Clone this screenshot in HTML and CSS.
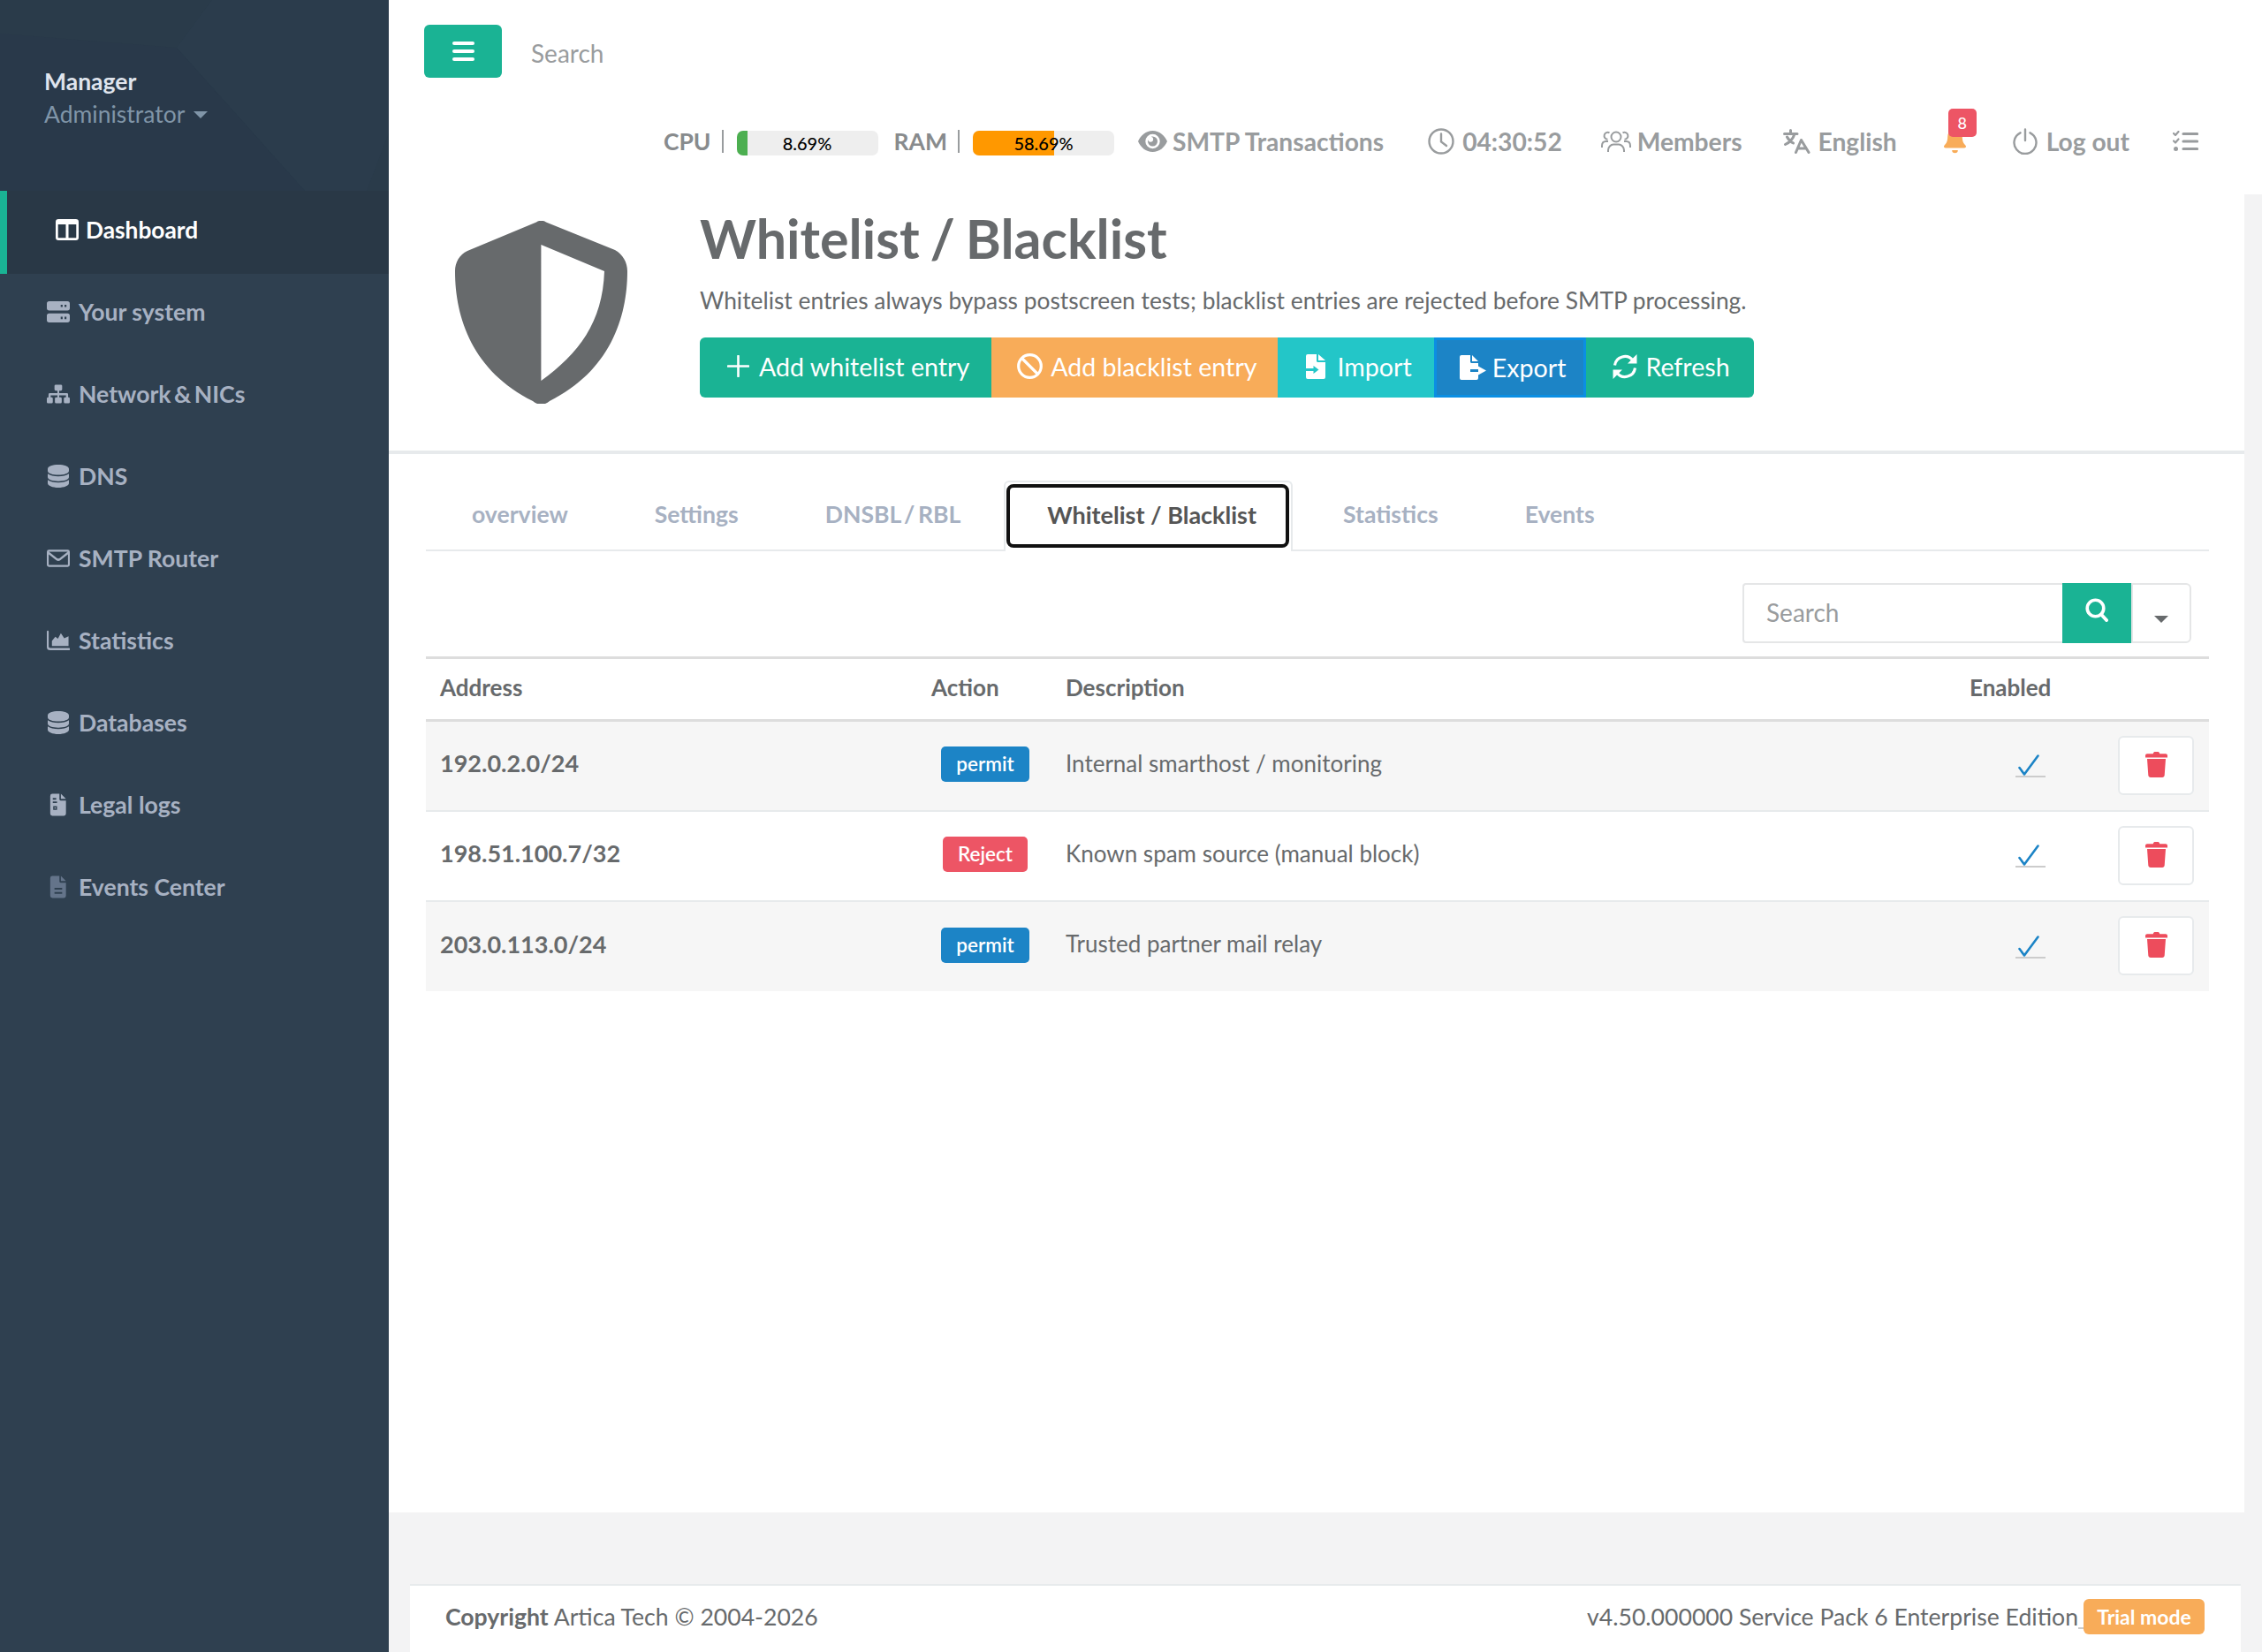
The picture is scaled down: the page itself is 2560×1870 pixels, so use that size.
FILE: index.html
```html
<!DOCTYPE html>
<html lang="en">
<head>
<meta charset="utf-8">
<title>Whitelist / Blacklist</title>
<link rel="stylesheet" href="styles.css">
</head>
<body>
<svg class="defs" width="0" height="0" aria-hidden="true">
  <symbol id="i-db" viewBox="0 0 24 26"><path fill="currentColor" d="M12 0C5.5 0 0 2 0 4.8V7c0 2.8 5.5 4.6 12 4.6S24 9.800 24 7V4.800C24 2 18.500 0 12 0zM0 10.200V14c0 2.800 5.500 4.700 12 4.700S24 16.800 24 14v-3.800c-2.600 2-7.200 3-12 3s-9.400-1-12-3zM0 17.200V21c0 2.800 5.500 5 12 5s12-2.200 12-5v-3.800c-2.600 2-7.200 3-12 3s-9.400-1-12-3z"/></symbol>
  <symbol id="i-trash" viewBox="0 0 25 29"><path fill="currentColor" d="M9 1.500C9.300.5 10 0 11 0h3c1 0 1.700.5 2 1.500l.3.800H23c1.100 0 2 .9 2 2V6.500H0V4.300c0-1.100.9-2 2-2h6.700zM2 8h21l-1.300 18.500c-.1 1.400-1.200 2.500-2.600 2.500H5.900c-1.400 0-2.500-1.100-2.600-2.500z"/></symbol>
  <symbol id="i-check" viewBox="0 0 24 24"><path fill="none" stroke="currentColor" stroke-width="2.600" stroke-linecap="round" stroke-linejoin="round" d="M1.500 15l5.500 7.500L22.500 1.500"/></symbol>
</svg>

<div class="app">
  <aside class="sidebar">
    <div class="profile">
      <svg class="profile-bg" viewBox="0 0 440 216" preserveAspectRatio="none" aria-hidden="true">
        <rect width="440" height="216" fill="#2a3b4a"/>
        <polygon points="0,38 200,54 345,216 0,216" fill="#27384a" opacity=".5"/>
        <polygon points="240,0 200,54 345,216 415,216 440,150 440,0" fill="#2c3f4f" opacity=".45"/>
      </svg>
      <div class="profile-name">Manager</div>
      <div class="profile-role">Administrator <span class="caret caret-light"></span></div>
    </div>
    <nav>
      <a class="nav-item nav-active"><svg class="nav-icon" viewBox="0 0 24 22"><path fill="currentColor" d="M3 0h18a3 3 0 0 1 3 3v16a3 3 0 0 1-3 3H3a3 3 0 0 1-3-3V3a3 3 0 0 1 3-3zm-.5 5.500V19c0 .3.200.5.500.5h7.600v-14zm10.900 0v14H21c.3 0 .5-.2.500-.5V5.500z"/></svg><span>Dashboard</span></a>
      <a class="nav-item"><svg class="nav-icon" viewBox="0 0 24 22"><path fill="currentColor" fill-rule="evenodd" d="M2.500 0h19A2.500 2.500 0 0 1 24 2.500V7a2.500 2.500 0 0 1-2.500 2.500h-19A2.500 2.500 0 0 1 0 7V2.500A2.500 2.500 0 0 1 2.500 0zM2.500 12.500h19A2.500 2.500 0 0 1 24 15v4.500a2.500 2.500 0 0 1-2.500 2.500h-19A2.500 2.500 0 0 1 0 19.500V15a2.500 2.500 0 0 1 2.500-2.500zM14.500 3.500h2v2.500h-2zM18.500 3.500h2v2.500h-2zM14.500 16h2v2.500h-2zM18.500 16h2v2.500h-2z"/></svg><span>Your system</span></a>
      <a class="nav-item"><svg class="nav-icon" viewBox="0 0 27 22"><path fill="currentColor" d="M10.500 0h6a1.500 1.500 0 0 1 1.500 1.500v4A1.500 1.500 0 0 1 16.500 7h-2v3h9A1.500 1.500 0 0 1 25 11.500V15h.5A1.500 1.500 0 0 1 27 16.500v4a1.500 1.500 0 0 1-1.500 1.500h-4a1.500 1.500 0 0 1-1.500-1.500v-4a1.500 1.500 0 0 1 1.500-1.500h1v-2.500h-8V15H16a1.500 1.500 0 0 1 1.500 1.500v4A1.500 1.500 0 0 1 16 22h-5a1.500 1.500 0 0 1-1.500-1.500v-4A1.500 1.500 0 0 1 11 15h1.500v-2.500h-8V15h1A1.500 1.500 0 0 1 7 16.500v4A1.500 1.500 0 0 1 5.500 22h-4A1.500 1.500 0 0 1 0 20.500v-4A1.500 1.500 0 0 1 1.500 15H2v-3.500A1.500 1.500 0 0 1 3.500 10h9V7h-2A1.500 1.500 0 0 1 9 5.500v-4A1.500 1.500 0 0 1 10.500 0z"/></svg><span class="tight-words">Network &amp; NICs</span></a>
      <a class="nav-item"><svg class="nav-icon icon-db"><use href="#i-db"/></svg><span>DNS</span></a>
      <a class="nav-item"><svg class="nav-icon" viewBox="0 0 27 20"><path fill="currentColor" d="M2.500 0h22A2.500 2.500 0 0 1 27 2.500v15a2.500 2.500 0 0 1-2.500 2.500h-22A2.500 2.500 0 0 1 0 17.500v-15A2.500 2.500 0 0 1 2.500 0zM2.200 5.300v12.200c0 .2.100.3.300.3h22c.2 0 .3-.1.300-.3V5.300l-9 7a4 4 0 0 1-4.600 0zm.2-3l9.800 7.700c.7.500 1.900.5 2.600 0l9.800-7.700c0-.1-.1-.1-.1-.1h-22c-.1 0-.1 0-.1.100z"/></svg><span>SMTP Router</span></a>
      <a class="nav-item"><svg class="nav-icon" viewBox="0 0 27 23"><path fill="currentColor" d="M0 1a1 1 0 0 1 2.200 0v17.500c0 1 .8 1.800 1.800 1.800h22a1.300 1.300 0 0 1 0 2.700H4a4 4 0 0 1-4-4zM6 18V12l4-5 3 2.500L16.500 3l4 6 5-2.500V18z"/></svg><span>Statistics</span></a>
      <a class="nav-item"><svg class="nav-icon icon-db"><use href="#i-db"/></svg><span>Databases</span></a>
      <a class="nav-item"><svg class="nav-icon" viewBox="0 0 27 26"><path fill="currentColor" fill-rule="evenodd" d="M6.500 0h8.300v6.500c0 .8.700 1.500 1.500 1.500h6.200v15.500a2.500 2.500 0 0 1-2.500 2.500h-13.500A2.500 2.500 0 0 1 4 23.500v-21A2.500 2.500 0 0 1 6.500 0zM16.500 0l6 6h-6zM7 5h4v2H7zM7 9h5v2H7zM7.500 14.500h4.500V19H7.500zM9 16v1.500h1.500V16z"/></svg><span>Legal logs</span></a>
      <a class="nav-item nav-dim"><svg class="nav-icon" viewBox="0 0 27 26"><path class="dim-fill" fill-rule="evenodd" d="M6.500 0h8.300v6.500c0 .8.700 1.500 1.500 1.500h6.200v15.500a2.500 2.500 0 0 1-2.500 2.500h-13.500A2.500 2.500 0 0 1 4 23.500v-21A2.500 2.500 0 0 1 6.500 0zM16.500 0l6 6h-6zM9 14v2h9v-2zM9 19v2h9v-2z"/></svg><span>Events Center</span></a>
    </nav>
  </aside>

  <main class="main">
    <header class="topbar">
      <div class="topbar-row">
        <button class="menu-btn" type="button" aria-label="Menu"><span></span><span></span><span></span></button>
        <input class="top-search" type="text" placeholder="Search">
      </div>
      <div class="status-row">
        <span class="stat-label">CPU</span><span class="stat-sep"></span>
        <div class="meter"><div class="meter-fill fill-green" style="width:12px"></div><span class="meter-text">8.69%</span></div>
        <span class="stat-label stat-ram">RAM</span><span class="stat-sep"></span>
        <div class="meter"><div class="meter-fill fill-orange" style="width:92px"></div><span class="meter-text">58.69%</span></div>
        <a class="status-link link-eye"><svg class="ic-eye" viewBox="0 0 33 24"><path fill="currentColor" fill-rule="evenodd" d="M16.500 0C24 0 30 5 33 12c-3 7-9 12-16.500 12S3 19 0 12C3 5 9 0 16.500 0zm0 3.800a8.200 8.200 0 1 0 0 16.400 8.200 8.200 0 0 0 0-16.400zm0 2.700a5.500 5.500 0 1 1-5.500 5.500c0-.6.100-1.100.3-1.600a3 3 0 1 0 3.600-3.600c.5-.2 1-.3 1.600-.3z"/></svg><span>SMTP Transactions</span></a>
        <a class="status-link link-clock"><svg class="ic-clock" viewBox="0 0 30 30"><circle cx="15" cy="15" r="13.500" fill="none" stroke="currentColor" stroke-width="2.400"/><path d="M15 6.500V15.500l6 4.500" fill="none" stroke="currentColor" stroke-width="2.400" stroke-linecap="round"/></svg><span>04:30:52</span></a>
        <a class="status-link link-members"><svg class="ic-users" viewBox="0 0 34 26"><g fill="none" stroke="currentColor" stroke-width="2"><circle cx="17" cy="8" r="5.500"/><path d="M8 25v-2c0-3.500 3-6.500 6-6.500h6c3 0 6 3 6 6.500v2"/><path d="M9.500 3.300a4 4 0 1 0-2 7.500M1 20v-2c0-3.500 2-5 4.500-5H8M24.500 3.300a4 4 0 1 1 2 7.500M33 20v-2c0-3.500-2-5-4.500-5H26"/></g></svg><span>Members</span></a>
        <a class="status-link link-lang"><svg class="ic-lang" viewBox="0 0 31 28"><g fill="none" stroke="currentColor" stroke-width="3" stroke-linecap="round" stroke-linejoin="round"><path d="M1.500 5.500H16M8.500 1.500v4M13 5.500c-1.500 5-5 9.500-10.500 12M4.500 9c1.500 3 4 5.500 7 7M14.500 26.500l6-14 8.500 14M17 22h9"/></g></svg><span>English</span></a>
        <a class="status-bell" aria-label="Notifications"><svg class="ic-bell" viewBox="0 0 25 30"><path fill="#f8ac59" d="M12.500 0c1 0 1.800.8 1.800 1.800v1a8 8 0 0 1 6.500 8c0 6 2 8 3.600 9.700.4.400.600.900.600 1.300 0 1-.8 1.700-1.800 1.700H1.800c-1 0-1.800-.7-1.800-1.700 0-.4.200-.9.600-1.300C2.200 18.800 4.200 16.800 4.200 10.800a8 8 0 0 1 6.500-8v-1c0-1 .8-1.800 1.800-1.800zM9.200 26h6.600a3.300 3.300 0 0 1-6.600 0z"/></svg><span class="bell-badge">8</span></a>
        <a class="status-link link-logout"><svg class="ic-power" viewBox="0 0 28 30"><path d="M8.500 5.300a12.500 12.500 0 1 0 11 0M14 1.500V14" fill="none" stroke="currentColor" stroke-width="2.400" stroke-linecap="round"/></svg><span>Log out</span></a>
        <a class="status-tasks" aria-label="Tasks"><svg class="ic-tasks" viewBox="0 0 29 24"><path fill="none" stroke="currentColor" stroke-width="2.200" stroke-linecap="round" stroke-linejoin="round" d="M1 3l2 2 3.500-4M1 11.500l2 2 3.500-4"/><circle cx="3.500" cy="20.500" r="2.500" fill="currentColor"/><path fill="none" stroke="currentColor" stroke-width="3.200" stroke-linecap="round" d="M12 3.500h15.500M12 12h15.500M12 20.500h15.500"/></svg></a>
      </div>
    </header>

    <section class="page">
      <div class="page-header">
        <svg class="shield" viewBox="0 0 195 207" aria-hidden="true"><path fill="#676a6c" fill-rule="evenodd" d="M92 1.500a10 10 0 0 1 11 0L181 33C190 38 195 47 195 57C195 110 175 170 107 204a14 14 0 0 1-19 0C20 170 0 110 0 57C0 47 5 38 14 34zM97.400 27V181C140 150 167 115 169 57z"/></svg>
        <div class="header-text">
          <h1 class="page-title">Whitelist / Blacklist</h1>
          <p class="page-sub">Whitelist entries always bypass postscreen tests; blacklist entries are rejected before SMTP processing.</p>
          <div class="btn-group">
            <button class="btn btn-green btn-first" type="button"><svg class="btn-ic ic-plus" viewBox="0 0 25 25"><path d="M12.500 1v23M1 12.500h23" stroke="currentColor" stroke-width="2.600" stroke-linecap="round" fill="none"/></svg>Add whitelist entry</button>
            <button class="btn btn-orange" type="button"><svg class="btn-ic ic-ban" viewBox="0 0 29 29"><circle cx="14.500" cy="14.500" r="12.800" fill="none" stroke="currentColor" stroke-width="3.200"/><path d="M5.500 5.500l18 18" stroke="currentColor" stroke-width="3.200" fill="none"/></svg>Add blacklist entry</button>
            <button class="btn btn-cyan" type="button"><svg class="btn-ic ic-file" viewBox="0 0 22 28"><path fill="currentColor" fill-rule="evenodd" d="M2 0h10v7.500c0 .8.700 1.500 1.500 1.500H22v17a2 2 0 0 1-2 2H2a2 2 0 0 1-2-2V19h8.500v3l6-4.500-6-4.500v3H0V2a2 2 0 0 1 2-2zM14 0l8 7h-8z"/></svg>Import</button>
            <button class="btn btn-blue" type="button"><svg class="btn-ic ic-export" viewBox="0 0 30 28"><path fill="currentColor" fill-rule="evenodd" d="M2 0h10v7.500c0 .8.700 1.500 1.500 1.500H21v7h-9v3h9v7a2 2 0 0 1-2 2H2a2 2 0 0 1-2-2V2a2 2 0 0 1 2-2zM14 0l7 7h-7zM21 12.500l9 5-9 5z"/></svg>Export</button>
            <button class="btn btn-green btn-last" type="button"><svg class="btn-ic ic-refresh" viewBox="0 0 28 28"><path fill="none" stroke="currentColor" stroke-width="3.200" d="M2.500 12.500A11.500 11.500 0 0 1 23 7M25.500 15.500A11.500 11.500 0 0 1 5 21"/><path fill="currentColor" d="M27.500 0v10.500H17zM.5 28V17.500H11z"/></svg>Refresh</button>
          </div>
        </div>
      </div>

      <div class="panel">
        <ul class="tabs">
          <li class="tab"><a>overview</a></li>
          <li class="tab"><a>Settings</a></li>
          <li class="tab tab-tight"><a>DNSBL / RBL</a></li>
          <li class="tab tab-active"><a>Whitelist / Blacklist</a></li>
          <li class="tab"><a>Statistics</a></li>
          <li class="tab"><a>Events</a></li>
        </ul>

        <div class="table-tools">
          <input class="tool-input" type="text" placeholder="Search">
          <button class="tool-search" type="button" aria-label="Search"><svg viewBox="0 0 26 27"><circle cx="11.500" cy="11.500" r="9.300" fill="none" stroke="currentColor" stroke-width="3.600"/><path d="M18 18.500l6 6.500" stroke="currentColor" stroke-width="4" stroke-linecap="round"/></svg></button>
          <button class="tool-drop" type="button" aria-label="Options"><span class="caret caret-dark"></span></button>
        </div>

        <table class="grid">
          <colgroup><col class="c-addr"><col class="c-act"><col class="c-desc"><col class="c-en"><col class="c-del"></colgroup>
          <thead>
            <tr><th>Address</th><th>Action</th><th>Description</th><th>Enabled</th><th></th></tr>
          </thead>
          <tbody>
            <tr class="odd">
              <td class="addr">192.0.2.0/24</td>
              <td class="act"><span class="pill pill-blue">permit</span></td>
              <td class="desc">Internal smarthost / monitoring</td>
              <td class="en"><a class="check"><svg><use href="#i-check"/></svg></a></td>
              <td class="del"><button class="del-btn" type="button" aria-label="Delete"><svg><use href="#i-trash"/></svg></button></td>
            </tr>
            <tr>
              <td class="addr">198.51.100.7/32</td>
              <td class="act"><span class="pill pill-red">Reject</span></td>
              <td class="desc">Known spam source (manual block)</td>
              <td class="en"><a class="check"><svg><use href="#i-check"/></svg></a></td>
              <td class="del"><button class="del-btn" type="button" aria-label="Delete"><svg><use href="#i-trash"/></svg></button></td>
            </tr>
            <tr class="odd">
              <td class="addr">203.0.113.0/24</td>
              <td class="act"><span class="pill pill-blue">permit</span></td>
              <td class="desc">Trusted partner mail relay</td>
              <td class="en"><a class="check"><svg><use href="#i-check"/></svg></a></td>
              <td class="del"><button class="del-btn" type="button" aria-label="Delete"><svg><use href="#i-trash"/></svg></button></td>
            </tr>
          </tbody>
        </table>
      </div>
    </section>

    <footer class="footer">
      <div class="copy"><strong>Copyright</strong> Artica Tech © 2004-2026</div>
      <div class="version">v4.50.000000 Service Pack 6 Enterprise Edition<a class="trial-gap"></a><span class="trial">Trial mode</span></div>
    </footer>
  </main>
</div>
</body>
</html>
```

FILE: styles.css
```css
* { box-sizing: border-box; }
html, body { margin: 0; padding: 0; height: 1870px; overflow: hidden; }
body {
  font-family: "Lato", "Liberation Sans", sans-serif;
  font-size: 26px;
  color: #676a6c;
  background: #f3f3f4;
}
.defs { position: absolute; }
.app { display: flex; width: 2560px; height: 1870px; overflow: hidden; }

/* Sidebar */
.sidebar { width: 440px; flex: none; background: #2f4050; }
.profile { position: relative; height: 216px; padding: 74px 0 0 50px; overflow: hidden; }
.profile-bg { position: absolute; left: 0; top: 0; width: 100%; height: 100%; }
.profile-name, .profile-role { position: relative; }
.profile-name { font-size: 26.500px; font-weight: 700; line-height: 36px; color: #dfe4ed; }
.profile-role { font-size: 26.500px; line-height: 38px; color: #8095a8; display: flex; align-items: center; gap: 10px; }
.caret { display: inline-block; width: 0; height: 0; border-left: 8px solid transparent; border-right: 8px solid transparent; }
.caret-light { border-top: 8px solid #8095a8; margin-top: 2px; }
.caret-dark { border-top: 8px solid #676a6c; }
.nav-item { display: flex; align-items: center; height: 93px; padding-left: 53px; padding-bottom: 8px; color: #a7b1c2; font-weight: 700; font-size: 26.600px; }
.nav-icon { width: 26px; height: 26px; margin-right: 10px; flex: none; }
.tight-words { word-spacing: -3px; }
.nav-active { height: 94px; padding-left: 55px; padding-bottom: 6px; border-left: 8px solid #1ab394; background: #293846; color: #fff; font-size: 26.300px; }
.nav-active .nav-icon { margin-right: 8px; }
.icon-db { color: #a7b1c2; }
.dim-fill { fill: #64748a; }

/* Top bar */
.main { flex: 1; display: flex; flex-direction: column; min-width: 0; }
.topbar { height: 220px; padding-top: 28px; background: #fff; flex: none; }
.topbar-row { display: flex; align-items: center; height: 60px; padding-left: 40px; }
.menu-btn { width: 88px; height: 60px; border: 0; border-radius: 6px; background: #1ab394; display: flex; flex-direction: column; align-items: center; justify-content: center; gap: 5px; padding: 0; }
.menu-btn span { display: block; width: 25px; height: 4px; border-radius: 2px; background: #fff; }
.top-search, .tool-input { border: 0; background: transparent; font: 400 28px "Lato", sans-serif; color: #676a6c; outline: none; padding: 0; }
.top-search { margin-left: 33px; width: 300px; height: 34px; margin-top: 3px; }
.top-search::placeholder, .tool-input::placeholder { color: #999c9e; opacity: 1; }
.status-row { display: flex; align-items: center; justify-content: flex-end; height: 28px; margin-top: 58px; padding-right: 72px; color: #999c9e; font-size: 28.200px; font-weight: 700; }
.stat-label { color: #888b8d; font-size: 26.500px; }
.stat-sep { width: 2px; height: 26px; background: #999c9e; margin: 0 15px 0 12px; }
.stat-ram { margin-left: 18px; }
.meter { position: relative; width: 160px; height: 28px; margin-top: 4px; border-radius: 7px; background: #eeeeee; overflow: hidden; text-align: center; }
.meter-fill { position: absolute; left: 0; top: 0; bottom: 0; }
.fill-green { background: #4caf50; }
.fill-orange { background: #ff9800; }
.meter-text { position: relative; font-size: 20px; line-height: 28px; color: #000; font-weight: 500; display: block; }
.status-link { display: flex; align-items: center; white-space: nowrap; }
.link-eye { margin-left: 27px; }
.link-clock { margin-left: 50px; }
.link-members { margin-left: 44px; }
.link-lang { margin-left: 46px; }
.link-logout { margin-left: 53px; }
.ic-eye { width: 33px; height: 24px; margin-right: 6px; }
.ic-clock { width: 30px; height: 30px; margin-right: 9px; }
.ic-users { width: 34px; height: 26px; margin-right: 7px; }
.ic-lang { width: 31px; height: 28px; margin-right: 9px; }
.ic-power { width: 28px; height: 30px; margin-right: 10px; }
.status-bell { position: relative; display: block; width: 25px; height: 30px; margin-left: 53px; }
.ic-bell { display: block; width: 25px; height: 30px; margin-top: -1px; }
.bell-badge { position: absolute; left: 5px; top: -22px; width: 32px; height: 32px; border-radius: 5px; background: #ed5565; color: #fff; font-size: 18px; font-weight: 500; line-height: 32px; text-align: center; }
.status-tasks { display: block; width: 29px; height: 24px; margin-left: 49px; }
.ic-tasks { display: block; width: 29px; height: 24px; }

/* Page */
.page { width: 2100px; height: 1492px; background: #fff; flex: none; }
.page-header { display: flex; height: 294px; padding: 30px 0 0 75px; border-bottom: 4px solid #e7eaec; }
.shield { width: 195px; height: 207px; flex: none; }
.header-text { margin-left: 82px; margin-top: -30px; }
.page-title { margin: 0; padding-top: 10px; font-size: 61px; line-height: 80px; font-weight: 700; color: #676a6c; white-space: nowrap; word-spacing: -3px; }
.page-sub { margin: 0; font-size: 26.330px; line-height: 34px; margin-top: 13px; white-space: nowrap; }
.btn-group { display: flex; margin-top: 25px; height: 68px; }
.btn { display: flex; align-items: center; height: 68px; border: 0; padding: 0 25px 3px 29px; font: 400 28.600px "Lato", sans-serif; color: #fff; white-space: nowrap; }
.btn-ic { flex: none; margin-right: 9px; }
.btn-green { background: #1ab394; }
.btn-orange { background: #f8ac59; padding-right: 23px; }
.btn-cyan { background: #23c6c8; padding-left: 32px; }
.btn-blue { background: #1c84c6; border: 3px solid #0b8fe3; padding-left: 26px; padding-right: 20px; padding-bottom: 0; }
.btn-first { border-radius: 6px 0 0 6px; padding-left: 31px; }
.btn-last { border-radius: 0 6px 6px 0; padding-left: 30px; padding-right: 27px; }
.ic-plus { width: 25px; height: 25px; margin-right: 11px; }
.ic-ban { width: 29px; height: 29px; }
.ic-file { width: 22px; height: 28px; margin-right: 14px; }
.ic-export { width: 30px; height: 28px; margin-right: 7px; }
.ic-refresh { width: 28px; height: 28px; margin-right: 9px; }

.panel { padding: 30px 40px 0 42px; }
.tabs { display: flex; list-style: none; margin: 0; padding: 0 0 0 3px; height: 80px; border-bottom: 2px solid #e7eaec; }
.tab { height: 80px; padding: 0 49px; font-size: 26.600px; font-weight: 700; color: #a7b1c2; line-height: 76px; white-space: nowrap; }
.tab-tight { word-spacing: -3px; }
.tab-active { position: relative; height: 80px; padding: 2px 2px 4px 1px; margin: 0 8px 0 0; background: #fff; border: 2px solid #e7eaec; border-bottom: 0; border-radius: 6px 6px 0 0; color: #555; font-size: 27px; line-height: 62px; }
.tab-active a { display: block; height: 72px; padding: 0 33px 0 42px; border: 4px solid #111; border-radius: 8px; }

.table-tools { display: flex; justify-content: flex-end; margin-top: 36px; height: 68px; padding-right: 20px; }
.tool-input { width: 362px; height: 68px; border: 2px solid #e5e6e7; border-right: 0; padding-left: 25px; padding-bottom: 2px; border-radius: 4px 0 0 4px; }
.tool-search { width: 78px; height: 68px; border: 0; padding: 0; background: #1ab394; color: #fff; display: flex; align-items: flex-start; justify-content: center; padding-top: 17px; }
.tool-search svg { width: 26px; height: 27px; }
.tool-drop { width: 68px; height: 68px; background: #fff; border: 2px solid #e5e6e7; border-radius: 0 6px 6px 0; padding: 12px 0 0; }

.grid { width: 2018px; margin-top: 15px; border-collapse: collapse; table-layout: fixed; border-top: 3px solid #ddd; }
.c-addr { width: 556px; }
.c-act { width: 152px; }
.c-desc { width: 1023px; }
.c-en { width: 170px; }
.c-del { width: 117px; }
.grid th { height: 71px; padding: 0 16px 5px; text-align: left; font-size: 26px; font-weight: 700; color: #676a6c; border-bottom: 3px solid #ddd; }
.grid td { height: 102px; padding: 0 16px 6px; font-size: 26px; border-top: 0; border-bottom: 2px solid #e7eaec; }
.grid tr:last-child td { border-bottom: 0; }
.odd td { background: #f6f6f6; }
.grid .addr { font-size: 27px; font-weight: 700; }
.grid .act { text-align: center; padding: 0 0 3px 2px; white-space: nowrap; }
.pill { display: inline-block; height: 40px; line-height: 40px; border-radius: 5px; padding: 0 17px; color: #fff; font-size: 22.500px; font-weight: 600; }
.pill-blue { background: #1c84c6; }
.pill-red { background: #ed5565; }
.grid .en { text-align: center; padding: 0; }
.check { display: inline-block; width: 34px; height: 33px; padding: 7px 0 0 3px; border-bottom: 2px solid #ccc; color: #1c84c6; }
.check svg { display: block; width: 24px; height: 24px; }
.grid .del { padding: 3px 3px 0 0; text-align: center; }
.del-btn { display: inline-block; width: 86px; height: 67px; background: #fff; border: 2px solid #e7eaec; border-radius: 6px; padding: 0; color: #ed4c5c; }
.del-btn svg { display: block; width: 25px; height: 29px; margin: 0 auto 2px; }

/* Footer */
.footer { margin: 81px 24px 0 24px; height: 77px; flex: none; background: #fff; border-top: 2px solid #e7eaec; display: flex; align-items: center; justify-content: space-between; padding: 0 41px 6px 40px; font-size: 26.600px; }
.copy strong { font-weight: 700; }
.version { display: flex; align-items: center; }
.trial-gap { width: 6px; height: 20px; border-bottom: 2px solid #ccc; align-self: flex-end; margin-bottom: 6px; }
.trial { width: 137px; height: 40px; border-radius: 6px; background: #f8ac59; color: #fff; font-size: 23px; font-weight: 700; line-height: 40px; text-align: center; }
```
